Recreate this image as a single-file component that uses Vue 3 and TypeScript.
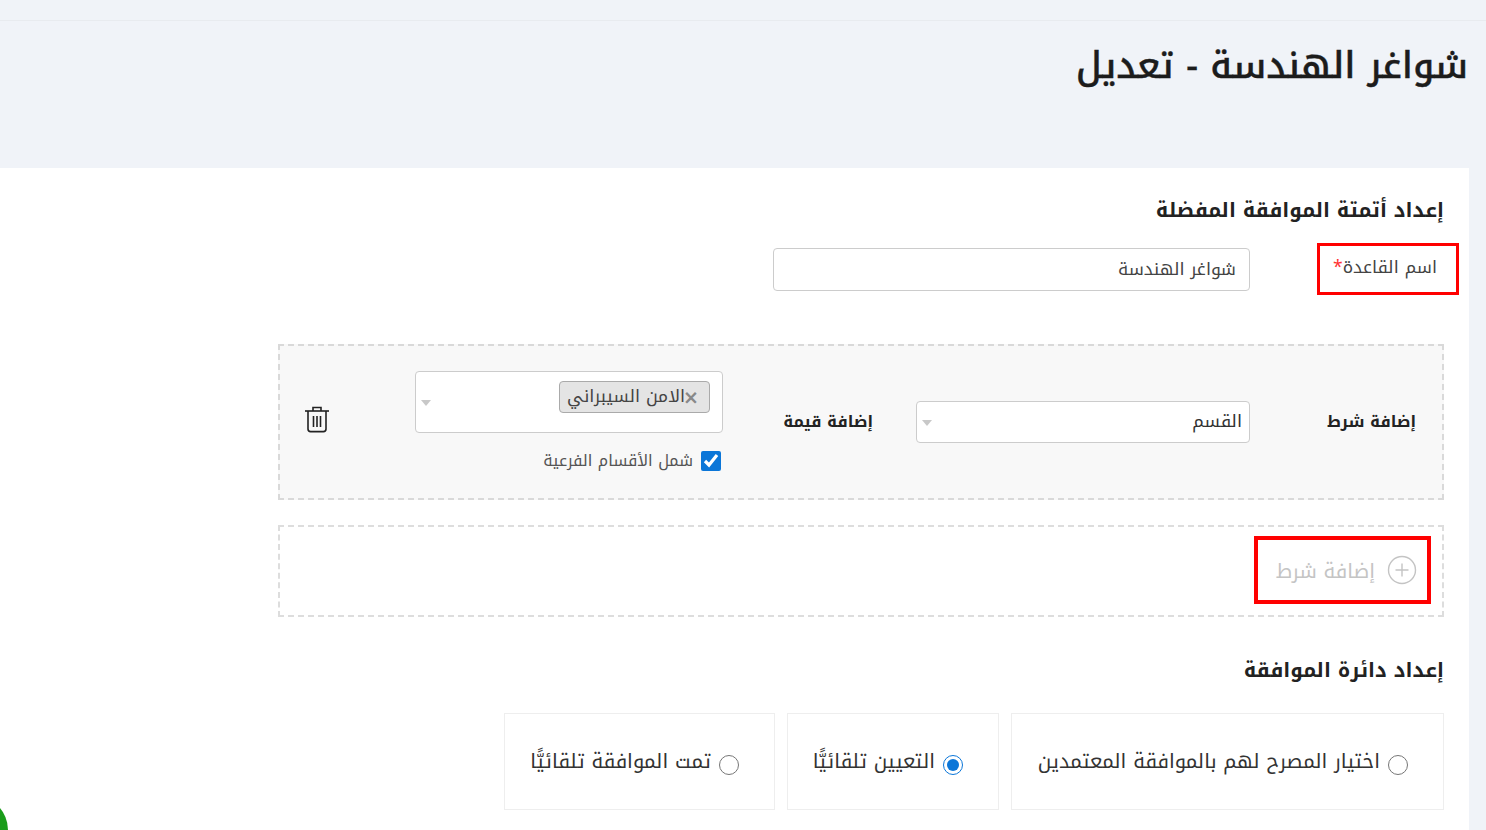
<script setup lang="ts">
import { ref } from 'vue'

const approval = ref('auto-assign')
const includeSub = ref(true)
const scopes = [
  { id: 'pick', label: 'اختيار المصرح لهم بالموافقة المعتمدين', width: 433 },
  { id: 'auto-assign', label: 'التعيين تلقائيًّا', width: 212 },
  { id: 'auto-approve', label: 'تمت الموافقة تلقائيًّا', width: 271 },
]
</script>

<template>
  <div class="page" dir="rtl">
    <div class="topbar"></div>
    <header class="head">
      <h1>شواغر الهندسة - تعديل</h1>
    </header>
    <main class="card">
      <h2 class="first">إعداد أتمتة الموافقة المفضلة</h2>
      <div class="name-row">
        <div class="name-label">اسم القاعدة<span class="req">*</span></div>
        <div class="name-input">شواغر الهندسة</div>
      </div>

      <section class="cond">
        <div class="cond-label">إضافة شرط</div>
        <div class="select field">
          <span class="sel-text">القسم</span>
          <i class="arrow"></i>
        </div>
        <div class="val-label">إضافة قيمة</div>
        <div class="val-group">
          <div class="select multi">
            <span class="tag"><span class="x">×</span>الامن السيبراني</span>
            <i class="arrow"></i>
          </div>
          <label class="check">
            <input v-model="includeSub" type="checkbox" />
            <span>شمل الأقسام الفرعية</span>
          </label>
        </div>
        <svg class="trash" width="26" height="28" viewBox="0 0 26 28" fill="none" stroke="#222" stroke-width="1.6">
          <path d="M1 6h24" />
          <path d="M9 6V2.500h8V6" />
          <path d="M4 6v18a2.600 2.600 0 0 0 2.600 2.600h12.800A2.600 2.600 0 0 0 22 24V6" />
          <path d="M9.500 11v11M13 11v11M16.500 11v11" />
        </svg>
      </section>

      <section class="add">
        <div class="add-btn">
          <svg width="30" height="30" viewBox="0 0 30 30" fill="none" stroke="#c4c4c4" stroke-width="1.400">
            <circle cx="15" cy="15" r="13.500" />
            <path d="M15 8.500v13M8.500 15h13" />
          </svg>
          <span>إضافة شرط</span>
        </div>
      </section>

      <h2 class="second">إعداد دائرة الموافقة</h2>
      <div class="scopes">
        <label v-for="s in scopes" :key="s.id" class="scope" :style="{ width: s.width + 'px' }">
          <input v-model="approval" type="radio" name="scope" :value="s.id" />
          <span>{{ s.label }}</span>
        </label>
      </div>
    </main>
    <div class="fab"></div>
  </div>
</template>

<style>
html, body { margin: 0; background: #f0f3f8; overflow: hidden; }
</style>

<style scoped>
.page {
  position: relative;
  height: 830px;
  overflow: hidden;
  background: #f0f3f8;
  font-family: "Noto Kufi Arabic", "DejaVu Sans", sans-serif;
  color: #222;
}
.topbar { height: 21px; border-bottom: 1px solid #e8ebef; box-sizing: border-box; }
.head { height: 147px; padding-right: 18px; box-sizing: border-box; }
h1 { margin: 0; padding-top: 19px; font-size: 36.400px; line-height: 52px; font-weight: 500; color: #1c1c1c; -webkit-text-stroke: 0.4px #1c1c1c; }
.card {
  width: 1469px;
  margin-right: 17px;
  height: 662px;
  background: #fff;
  padding-right: 25px;
  box-sizing: border-box;
}
h2 { margin: 0; font-size: 20px; font-weight: 700; line-height: 32px; color: #222; }
.first { padding-top: 26px; }
.name-row { display: flex; align-items: center; margin-top: 17px; margin-right: -15px; }
.name-label {
  width: 142px;
  height: 52px;
  box-sizing: border-box;
  border: 3px solid #f00;
  padding-right: 19px;
  font-size: 17.500px;
  line-height: 44px;
  color: #444;
}
.req { color: #f33; }
.name-input {
  width: 477px;
  height: 43px;
  margin-right: 67px;
  box-sizing: border-box;
  background: #fff;
  border: 1px solid #ccc;
  border-radius: 4px;
  padding-right: 13px;
  font-size: 17.500px;
  line-height: 41px;
  color: #444;
}
.cond {
  display: flex;
  align-items: center;
  width: 1166px;
  height: 156px;
  box-sizing: border-box;
  margin-top: 49px;
  padding-right: 26px;
  background: #f8f8f8;
  border: 2px dashed #d9d9d9;
}
.cond-label { width: 166px; margin-top: -2px; font-size: 16px; font-weight: 700; color: #222; }
.select {
  position: relative;
  box-sizing: border-box;
  background: #fff;
  border: 1px solid #ccc;
  border-radius: 4px;
}
.field { width: 334px; height: 42px; padding-right: 7px; line-height: 38px; font-size: 17.700px; color: #333; }
.arrow {
  position: absolute;
  left: 5px;
  top: 50%;
  margin-top: -2px;
  width: 0;
  height: 0;
  border-left: 5.500px solid transparent;
  border-right: 5.500px solid transparent;
  border-top: 6px solid #c8c8c8;
}
.val-label { width: 150px; margin: -2px 43px 0 0; font-size: 16px; font-weight: 700; color: #222; }
.val-group { width: 308px; margin-top: -3px; }
.multi { height: 62px; padding: 9px 12px 0 0; }
.tag {
  display: inline-flex;
  align-items: center;
  height: 32px;
  box-sizing: border-box;
  padding: 0 8px 0 7px;
  background: #e4e4e4;
  border: 1px solid #aaa;
  border-radius: 4px;
  font-size: 17.500px;
  line-height: 28px;
  color: #444;
}
.x { width: 14px; margin-right: 2px; font-family: "DejaVu Sans", sans-serif; font-size: 19px; font-weight: 700; color: #888; }
.check { display: flex; align-items: center; margin-top: 18px; font-size: 16px; line-height: 20px; color: #555; }
.check input { width: 20px; height: 20px; margin: 0 2px 0 8px; accent-color: #0b76d8; }
.trash { margin-right: 85px; margin-top: -7px; }
.add {
  display: flex;
  align-items: center;
  width: 1166px;
  height: 92px;
  box-sizing: border-box;
  margin-top: 25px;
  padding-right: 11px;
  border: 2px dashed #ddd;
}
.add-btn {
  display: flex;
  align-items: center;
  gap: 12px;
  width: 177px;
  height: 68px;
  box-sizing: border-box;
  margin-top: -2px;
  border: 4px solid #f00;
  padding-right: 10px;
  font-size: 20px;
  color: #c4c4c4;
}
.add-btn span { margin-top: 2px; }
.second { margin-top: 37px; }
.scopes { display: flex; gap: 12px; margin-top: 27px; }
.scope {
  display: flex;
  align-items: center;
  flex: none;
  height: 97px;
  box-sizing: border-box;
  padding-right: 35px;
  border: 1px solid #eee;
  font-size: 20px;
  line-height: 30px;
  color: #333;
}
.scope span { margin-top: -1px; }
.scope input { width: 20px; height: 20px; margin: 6px 0 0 8px; accent-color: #0b76d8; }
.fab {
  position: absolute;
  left: -60px;
  bottom: -34px;
  width: 68px;
  height: 68px;
  border-radius: 50%;
  background: #1a9c1a;
}
</style>
